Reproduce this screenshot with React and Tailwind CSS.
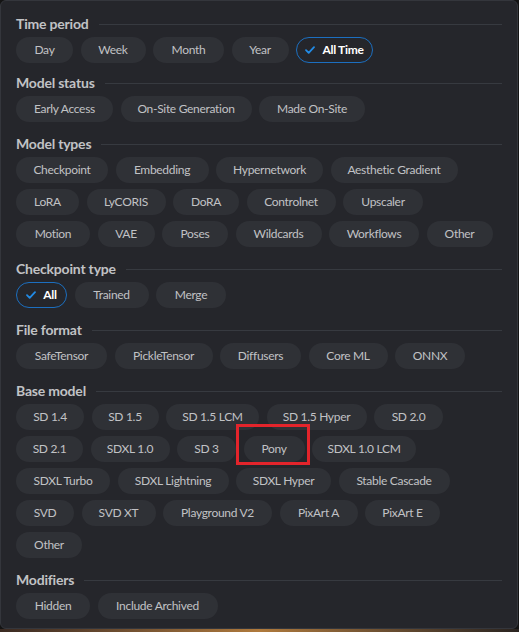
import React from 'react';

// each chip: [label, width class, checked]
const sections = [
  {
    title: 'Time period',
    rows: [[['Day', 'w-[57px]'], ['Week', 'w-[65px]'], ['Month', 'w-[71px]'], ['Year', 'w-[57px]'], ['All Time', 'w-[77px]', true]]],
  },
  {
    title: 'Model status',
    rows: [[['Early Access', 'w-[97px]'], ['On-Site Generation', 'w-[131px]'], ['Made On-Site', 'w-[106px]']]],
  },
  {
    title: 'Model types',
    rows: [
      [['Checkpoint', 'w-[92px]'], ['Embedding', 'w-[93px]'], ['Hypernetwork', 'w-[107px]'], ['Aesthetic Gradient', 'w-[127px]']],
      [['LoRA', 'w-[63px]'], ['LyCORIS', 'w-[79px]'], ['DoRA', 'w-[66px]'], ['Controlnet', 'w-[89px]'], ['Upscaler', 'w-[80px]']],
      [['Motion', 'w-[74px]'], ['VAE', 'w-[57px]'], ['Poses', 'w-[66px]'], ['Wildcards', 'w-[86px]'], ['Workflows', 'w-[90px]'], ['Other', 'w-[66px]']],
    ],
  },
  {
    title: 'Checkpoint type',
    rows: [[['All', 'w-[51px]', true], ['Trained', 'w-[74px]'], ['Merge', 'w-[70px]']]],
  },
  {
    title: 'File format',
    rows: [[['SafeTensor', 'w-[91px]'], ['PickleTensor', 'w-[98px]'], ['Diffusers', 'w-[81px]'], ['Core ML', 'w-[79px]'], ['ONNX', 'w-[70px]']]],
  },
  {
    title: 'Base model',
    rows: [
      [['SD 1.4', 'w-[68px]'], ['SD 1.5', 'w-[67px]'], ['SD 1.5 LCM', 'w-[93px]'], ['SD 1.5 Hyper', 'w-[100px]'], ['SD 2.0', 'w-[69px]']],
      [['SD 2.1', 'w-[67px]'], ['SDXL 1.0', 'w-[79px]'], ['SD 3', 'w-[59px]'], ['Pony', 'w-[61px]'], ['SDXL 1.0 LCM', 'w-[104px]']],
      [['SDXL Turbo', 'w-[94px]'], ['SDXL Lightning', 'w-[111px]'], ['SDXL Hyper', 'w-[95px]'], ['Stable Cascade', 'w-[111px]']],
      [['SVD', 'w-[58px]'], ['SVD XT', 'w-[74px]'], ['Playground V2', 'w-[109px]'], ['PixArt A', 'w-[78px]'], ['PixArt E', 'w-[75px]']],
      [['Other', 'w-[66px]']],
    ],
  },
  {
    title: 'Modifiers',
    rows: [[['Hidden', 'w-[74px]'], ['Include Archived', 'w-[120px]']]],
  },
];

const Check = () => (
  <svg width="10" height="8" viewBox="0 0 10 8" fill="none">
    <path d="M1 4.1 L3.7 6.8 L9 1.2" stroke="#228be6" strokeWidth="1.8" strokeLinecap="round" strokeLinejoin="round" />
  </svg>
);

const Chip = ({ label, width, checked }) => {
  if (checked) {
    return (
      <div className={`${width} h-[26px] flex items-center justify-center gap-[7px] rounded-full border border-[#1c6fc0] bg-[#25262b] text-white font-bold text-[12px] tracking-[-0.3px]`}>
        <Check />
        <span>{label}</span>
      </div>
    );
  }
  return (
    <div className={`${width} h-[26px] flex items-center justify-center rounded-full bg-[#2f3136] text-[#c1c2c5] text-[12px] tracking-[-0.3px] whitespace-nowrap`}>
      {label}
    </div>
  );
};

export default function App() {
  return (
    <div
      className="relative w-[519px] h-[632px] overflow-hidden bg-[#141414]"
      style={{ fontFamily: 'Lato, "Open Sans", sans-serif' }}
    >
      <div className="w-[518px] h-[629px] bg-[#25262b] border border-[#34363c] rounded-[6px] pl-[15px] pr-[15px] pt-[13px] flex flex-col">
        {sections.map((s, i) => (
          <div key={s.title} className={i === 0 ? 'mb-[10px]' : 'mb-[12px]'}>
            <div className="h-[20px] flex items-center gap-[10px]">
              <span className="text-[14px] font-bold text-[#c1c2c5] leading-none tracking-[-0.2px]">{s.title}</span>
              <div className="flex-1 h-px bg-[#373a40]" />
            </div>
            <div className="mt-[3px] flex flex-col gap-[6px]">
              {s.rows.map((row, r) => (
                <div key={r} className="flex gap-[7.5px]">
                  {row.map(([label, width, checked]) => (
                    <Chip key={label} label={label} width={width} checked={checked} />
                  ))}
                </div>
              ))}
            </div>
          </div>
        ))}
      </div>
      <div className="absolute left-0 bottom-0 w-full h-[3px] bg-gradient-to-r from-[#3a2a22] via-[#b07a3c] to-[#2a2420]" />
      <div className="absolute left-[236px] top-[424px] w-[74px] h-[41px] border-[3px] border-[#e3242b]" />
    </div>
  );
}
